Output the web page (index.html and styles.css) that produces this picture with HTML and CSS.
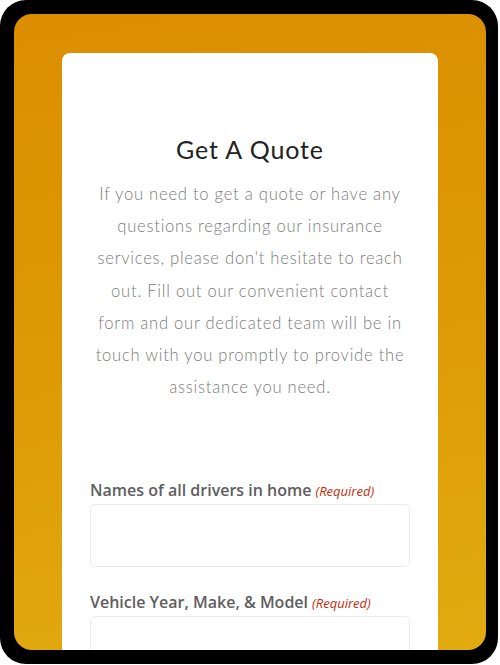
FILE: index.html
```html
<!DOCTYPE html>
<html>
<head>
<meta charset="utf-8">
<link rel="stylesheet" href="styles.css">
</head>
<body>
<div class="frame">
  <div class="panel">
    <div class="card">
      <h1 class="title">Get A Quote</h1>
      <p class="intro">If you need to get a quote or have any<br>questions regarding our insurance<br>services, please don't hesitate to reach<br>out. Fill out our convenient contact<br>form and our dedicated team will be in<br>touch with you promptly to provide the<br>assistance you need.</p>
      <form class="form">
        <div class="field">
          <label class="label">Names of all drivers in home<span class="req">(Required)</span></label>
          <input class="input" type="text">
        </div>
        <div class="field">
          <label class="label">Vehicle Year, Make, &amp; Model<span class="req">(Required)</span></label>
          <input class="input" type="text">
        </div>
      </form>
    </div>
  </div>
</div>
</body>
</html>
```
FILE: styles.css
```css
html, body {
  margin: 0;
  padding: 0;
  background: #ffffff;
}
.frame {
  width: 498px;
  height: 664px;
  background: #000;
  border-radius: 26px;
  padding: 14px;
  box-sizing: border-box;
}
.panel {
  width: 472px;
  height: 636px;
  border-radius: 18px;
  overflow: hidden;
  background: linear-gradient(170deg, #db8e00 0%, #dd9a06 50%, #e2ab10 100%);
  padding: 39px 48px 0 48px;
  box-sizing: border-box;
}
.card {
  background: #fff;
  border-radius: 8px 8px 0 0;
  height: 700px;
  padding: 80px 28px 0 28px;
  box-sizing: border-box;
}
.title {
  margin: 0;
  font-family: "Lato", sans-serif;
  font-weight: 400;
  font-size: 25px;
  line-height: 32px;
  color: #222;
  text-align: center;
  letter-spacing: 0.9px;
}
.intro {
  margin: 13px 0 0 0;
  font-family: "Lato", sans-serif;
  font-weight: 300;
  font-size: 16.6px;
  line-height: 32.2px;
  color: #7c7c7c;
  text-align: center;
  letter-spacing: 0.75px;
  white-space: nowrap;
}
.form {
  margin-top: 77px;
  display: flex;
  flex-direction: column;
  gap: 25px;
}
.field {
  display: flex;
  flex-direction: column;
  gap: 3px;
}
.label {
  font-family: "Open Sans", sans-serif;
  font-weight: 600;
  font-size: 16px;
  line-height: 20px;
  color: #5e5e5e;
}
.req {
  font-style: italic;
  font-weight: 400;
  font-size: 13px;
  color: #c02b0a;
  margin-left: 4px;
}
.input {
  height: 63px;
  box-sizing: border-box;
  border: 1px solid #ececec;
  border-radius: 5px;
  background: #fff;
  margin: 0;
  width: 100%;
}
```
